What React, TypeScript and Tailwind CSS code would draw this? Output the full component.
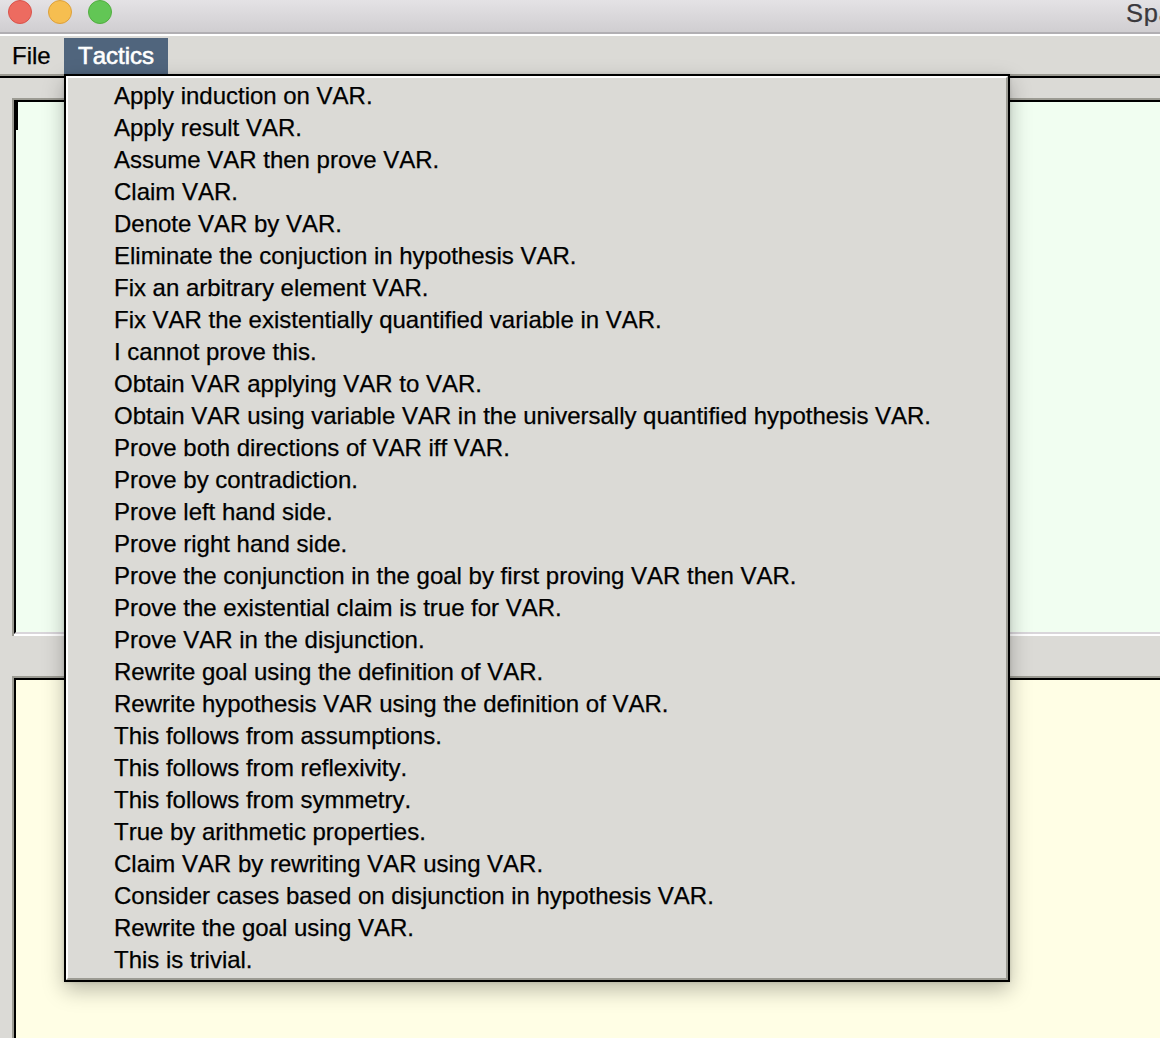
const tactics = [
  'Apply induction on VAR.',
  'Apply result VAR.',
  'Assume VAR then prove VAR.',
  'Claim VAR.',
  'Denote VAR by VAR.',
  'Eliminate the conjuction in hypothesis VAR.',
  'Fix an arbitrary element VAR.',
  'Fix VAR the existentially quantified variable in VAR.',
  'I cannot prove this.',
  'Obtain VAR applying VAR to VAR.',
  'Obtain VAR using variable VAR in the universally quantified hypothesis VAR.',
  'Prove both directions of VAR iff VAR.',
  'Prove by contradiction.',
  'Prove left hand side.',
  'Prove right hand side.',
  'Prove the conjunction in the goal by first proving VAR then VAR.',
  'Prove the existential claim is true for VAR.',
  'Prove VAR in the disjunction.',
  'Rewrite goal using the definition of VAR.',
  'Rewrite hypothesis VAR using the definition of VAR.',
  'This follows from assumptions.',
  'This follows from reflexivity.',
  'This follows from symmetry.',
  'True by arithmetic properties.',
  'Claim VAR by rewriting VAR using VAR.',
  'Consider cases based on disjunction in hypothesis VAR.',
  'Rewrite the goal using VAR.',
  'This is trivial.',
];

function TitleBar() {
  return (
    <header className="flex h-[34px] shrink-0 items-start justify-between border-b-2 border-[#b1afb3] bg-linear-to-b from-[#e4e2e5] to-[#d0ced1]">
      <div className="flex gap-4 pl-2">
        <span className="size-6 rounded-full border-[1.5px] border-[#d9534b] bg-[#ed6b60]" />
        <span className="size-6 rounded-full border-[1.5px] border-[#dda03b] bg-[#f6be50]" />
        <span className="size-6 rounded-full border-[1.5px] border-[#52ae40] bg-[#62c655]" />
      </div>
      <div className="w-[34px] overflow-hidden whitespace-nowrap text-[25.5px] leading-[26px] tracking-[0.8px] text-[#3b393d]">
        Spa
      </div>
    </header>
  );
}

function TacticsMenu() {
  return (
    <div className="absolute top-9 left-0 z-10 w-[946px] border-2 border-black shadow-[0_8px_20px_rgba(0,0,0,0.27),0_0_3px_rgba(0,0,0,0.15)]">
      <ul className="border-2 border-t-white border-r-[#9c9b93] border-b-[#9c9b93] border-l-white bg-[#dbdad6] py-0.5 pl-[46px]">
        {tactics.map((label) => (
          <li key={label} className="h-8 whitespace-nowrap leading-8">
            {label}
          </li>
        ))}
      </ul>
    </div>
  );
}

export default function App() {
  return (
    <div className="flex h-[1038px] w-[1160px] flex-col overflow-hidden bg-[#dbdad6] font-['Liberation_Sans',Arial,sans-serif] text-[24px] tracking-[-0.01px] text-black [-webkit-text-stroke-width:0.25px] [font-kerning:none]">
      <TitleBar />
      <nav className="h-11 shrink-0 border-t-2 border-b-2 border-t-white border-b-black">
        <div className="flex h-10 items-start border-b-2 border-[#9c9b93] pt-0.5">
          <div className="h-9 w-16 pl-3 leading-9">File</div>
          <div className="relative h-9 w-[104px]">
            <div className="h-9 bg-[#50657d] pl-[14px] leading-9 text-white [-webkit-text-stroke-width:0.6px]">Tactics</div>
            <TacticsMenu />
          </div>
        </div>
      </nav>
      <main className="flex flex-1 flex-col pl-3 pt-5">
        <section className="h-[538px] shrink-0 border-t-2 border-l-2 border-[#9c9b93]">
          <div className="h-full border-b-2 border-white">
            <div className="h-full border-t-2 border-b-2 border-l-2 border-t-black border-b-[#d9d6da] border-l-black bg-[#f1fef1]">
              <div className="h-7 w-0.5 bg-black" />
            </div>
          </div>
        </section>
        <section className="mt-10 flex-1 border-t-2 border-l-2 border-[#9c9b93]">
          <div className="h-full border-t-2 border-l-2 border-black bg-[#fffee5]" />
        </section>
      </main>
    </div>
  );
}
